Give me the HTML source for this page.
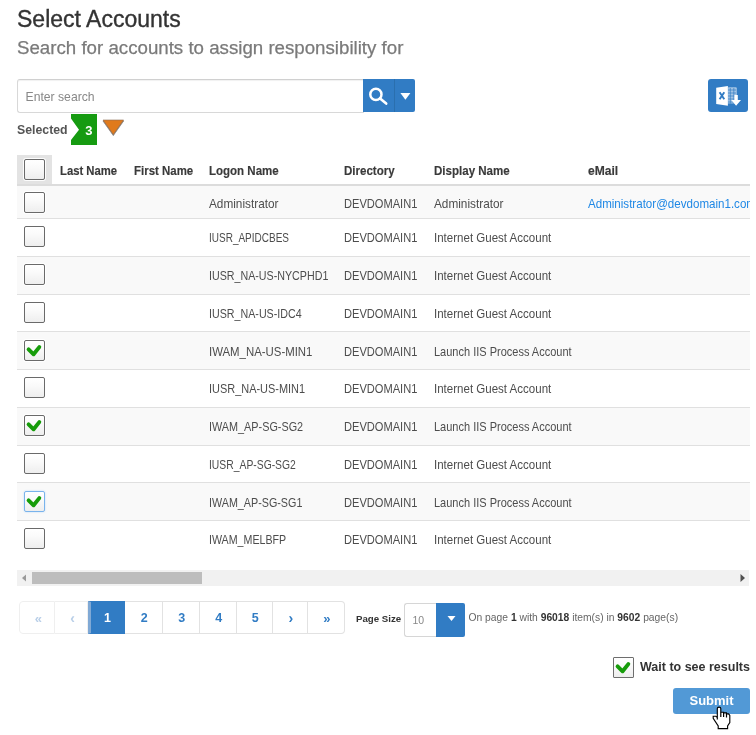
<!DOCTYPE html>
<html><head><meta charset="utf-8">
<style>
html,body{margin:0;padding:0;background:#fff;}
body{width:756px;height:735px;position:relative;overflow:hidden;font-family:"Liberation Sans",sans-serif;color:#555;}
.a{position:absolute;white-space:nowrap;}
.title{position:absolute;left:17px;top:4.6px;font-size:23px;color:#333;-webkit-text-stroke:0.35px #333;line-height:28px;}
.sub{position:absolute;left:17px;top:35.7px;font-size:18.7px;color:#7a7a7a;-webkit-text-stroke:0.25px #7a7a7a;line-height:24px;}
.search{position:absolute;left:17px;top:79px;width:346px;height:32px;border:1px solid #d8d8d8;border-top:1px solid #d0d0d0;box-shadow:inset 0 1px 1px rgba(0,0,0,0.06);border-right:none;border-radius:3px 0 0 3px;}
.search span{position:absolute;left:7.5px;top:9.5px;font-size:12.2px;color:#888;}
.sbtn{position:absolute;left:363px;top:79px;width:31px;height:33px;background:#317cc4;}
.dbtn{position:absolute;left:394px;top:79px;width:21px;height:33px;background:#317cc4;border-left:1px solid #2a6fae;box-sizing:border-box;border-radius:0 2px 2px 0;}
.xbtn{position:absolute;left:708px;top:79px;width:40px;height:33px;background:#317cc4;border-radius:3px;}
.selected{position:absolute;left:17px;top:123.2px;font-size:12.3px;font-weight:bold;color:#555;}
.badge{position:absolute;left:71px;top:114px;width:26px;height:31px;}
.tri{position:absolute;left:101.5px;top:119.3px;}
.hdr{position:absolute;left:17px;top:155px;width:733px;height:29px;background:#fff;}
.hcb{position:absolute;left:17px;top:155px;width:35px;height:29px;background:#e3e3e3;}
.hline{position:absolute;left:17px;top:184px;width:733px;height:2px;background:#dcdcdc;}
.th{position:absolute;top:163.6px;font-size:12px;font-weight:bold;color:#3a3a3a;-webkit-text-stroke:0.15px #3a3a3a;white-space:nowrap;transform-origin:0 0;line-height:14px;}
.clip{position:absolute;left:0;top:0;width:750px;height:560px;overflow:hidden;}
.row{position:absolute;left:17px;width:733px;}
.line{position:absolute;left:17px;width:733px;height:1px;background:#e0e0e0;}
.cb{position:absolute;left:24px;width:19px;height:19px;border:1px solid #6a6a6a;border-radius:2px;background:linear-gradient(#fff 0%,#fafafa 40%,#eeeeee 100%);box-shadow:0 0 0 1px rgba(255,255,255,0.9);}
.cb .ck{position:absolute;left:-1px;top:-1px;}
.cb.focus{border-color:#79b3ec;box-shadow:0 0 2px #b8d8f7;}
.td{position:absolute;font-size:12.2px;color:#4d4d4d;white-space:nowrap;line-height:14px;transform-origin:0 0;}
.td.em{color:#1f88e5;}
.scroll{position:absolute;left:17px;top:570px;width:732px;height:16px;background:#f1f1f1;}
.thumb{position:absolute;left:32px;top:572px;width:170px;height:12px;background:#bdbdbd;}
.pg{position:absolute;top:601px;height:33px;box-sizing:border-box;border:1px solid #e2e2e2;border-left:none;text-align:center;font-size:12.5px;font-weight:bold;color:#317cc4;line-height:33px;padding-left:1.5px;}
.pg.dis{color:#b9cfe8;border-color:#efefef;}
.pg.act{background:#317cc4;color:#fff;border-color:#317cc4;}
.psz{position:absolute;left:356px;top:613.3px;font-size:9.7px;font-weight:bold;color:#333;}
.pin{position:absolute;left:403.5px;top:603px;width:32.5px;height:34px;box-sizing:border-box;border:1px solid #d6d6d6;border-right:none;border-radius:3px 0 0 3px;}
.pin span{position:absolute;left:8px;top:9.6px;font-size:10.5px;color:#888;}
.pbtn{position:absolute;left:436px;top:603px;width:29px;height:34px;background:#317cc4;border-radius:0 2px 2px 0;}
.info{position:absolute;left:468.5px;top:612px;font-size:10.3px;color:#666;white-space:nowrap;}
.info b{color:#333;}
.wcb{position:absolute;left:613px;top:657px;width:19px;height:19px;border:1px solid #6e6e6e;border-radius:1px;background:linear-gradient(#fff 0%,#fafafa 40%,#eeeeee 100%);}
.wcb .ck{position:absolute;left:-1px;top:-1px;}
.wait{position:absolute;left:640px;top:659.6px;font-size:12.5px;font-weight:bold;color:#333;white-space:nowrap;}
.submit{position:absolute;left:673px;top:688px;width:77px;height:26px;background:#5299d6;border-radius:3px;color:#fff;font-size:13px;font-weight:bold;text-align:center;line-height:26px;}
</style></head><body><div id="wrap" style="position:absolute;left:0;top:0;width:756px;height:735px;will-change:transform;">
<div class="title">Select Accounts</div>
<div class="sub">Search for accounts to assign responsibility for</div>

<div class="search"><span>Enter search</span></div>
<div class="sbtn"><svg width="31" height="33" viewBox="0 0 31 33"><circle cx="12.9" cy="15.4" r="5.6" fill="none" stroke="#fff" stroke-width="2.5"/><path d="M17.1 19.4 L23.2 24.6" stroke="#fff" stroke-width="2.6" stroke-linecap="round"/></svg></div>
<div class="dbtn"><svg width="21" height="33" viewBox="0 0 21 33"><path d="M5.4 14 L15.4 14 L10.4 20.8 Z" fill="#fff"/></svg></div>
<div class="xbtn"><svg width="40" height="33" viewBox="0 0 40 33">
<path d="M20.1 8.2 H27.8 Q28.8 8.2 28.8 9.2 V24.6 H20.1 Z" fill="#fff" fill-opacity="0.55"/>
<path d="M20 11 H28 M20 14 H28 M20 17 H28 M20 20 H28 M20 23 H28 M22.3 9 V24.5 M25.8 9 V24.5" stroke="#317cc4" stroke-width="0.9" stroke-opacity="0.75" fill="none"/>
<path d="M8.2 8.8 L19.9 7 L19.9 26.8 L8.2 25 Z" fill="#fff"/>
<path d="M11.6 13.2 L16.3 20.2 M16.3 13.2 L11.6 20.2" stroke="#317cc4" stroke-width="1.9"/>
<path d="M26.4 15.9 H29.8 V21 H33 L28.1 26.8 L23.3 21 H26.4 Z" fill="#fff"/>
</svg></div>

<div class="selected">Selected</div>
<svg class="badge" width="26" height="31" viewBox="0 0 26 31"><path d="M0 0 H26 V31 H0 V26 L8 15.8 L0 4.5 Z" fill="#169b11"/><text x="17.8" y="21.2" font-family="Liberation Sans" font-size="13" font-weight="bold" fill="#fff" text-anchor="middle">3</text></svg>
<svg class="tri" width="26" height="20" viewBox="0 0 26 20"><defs><filter id="sh" x="-20%" y="-20%" width="140%" height="150%"><feGaussianBlur in="SourceAlpha" stdDeviation="0.7"/><feOffset dy="0.6"/><feComponentTransfer><feFuncA type="linear" slope="0.6"/></feComponentTransfer><feMerge><feMergeNode/><feMergeNode in="SourceGraphic"/></feMerge></filter></defs><path d="M1 1 H21.6 L11.3 15.6 Z" fill="#e07a1f" stroke="#8a6a50" stroke-width="0.6" stroke-linejoin="round" filter="url(#sh)"/></svg>

<div class="clip">
<div class="hdr"></div>
<div class="hcb"></div>
<div class="hline"></div>
<div class="cb" style="top:159px;"></div>
<div class="th" style="left:60px;transform:scaleX(0.9404)">Last Name</div>
<div class="th" style="left:134px;transform:scaleX(0.9543)">First Name</div>
<div class="th" style="left:209px;transform:scaleX(0.9590)">Logon Name</div>
<div class="th" style="left:344px;transform:scaleX(0.9613)">Directory</div>
<div class="th" style="left:434px;transform:scaleX(0.9618)">Display Name</div>
<div class="th" style="left:588px;transform:scaleX(1.0056)">eMail</div>

<div class="row" style="top:186px;height:32px;background:#f9f9f9"></div>
<div class="line" style="top:218px"></div>
<div class="cb" style="top:192px"></div>
<div class="td" style="top:196.80px;left:209px;transform:scaleX(0.9678)">Administrator</div>
<div class="td" style="top:196.80px;left:344px;transform:scaleX(0.9099)">DEVDOMAIN1</div>
<div class="td" style="top:196.80px;left:434px;transform:scaleX(0.9678)">Administrator</div>
<div class="td em" style="top:196.80px;left:588px;transform:scaleX(0.949)">Administrator@devdomain1.com</div>
<div class="row" style="top:219px;height:37px;background:#ffffff"></div>
<div class="line" style="top:256px"></div>
<div class="cb" style="top:226px"></div>
<div class="td" style="top:231.38px;left:209px;transform:scaleX(0.8201)">IUSR_APIDCBES</div>
<div class="td" style="top:231.38px;left:344px;transform:scaleX(0.9099)">DEVDOMAIN1</div>
<div class="td" style="top:231.38px;left:434px;transform:scaleX(0.9458)">Internet Guest Account</div>
<div class="row" style="top:257px;height:37px;background:#f9f9f9"></div>
<div class="line" style="top:294px"></div>
<div class="cb" style="top:264px"></div>
<div class="td" style="top:269.12px;left:209px;transform:scaleX(0.8767)">IUSR_NA-US-NYCPHD1</div>
<div class="td" style="top:269.12px;left:344px;transform:scaleX(0.9099)">DEVDOMAIN1</div>
<div class="td" style="top:269.12px;left:434px;transform:scaleX(0.9458)">Internet Guest Account</div>
<div class="row" style="top:295px;height:36px;background:#ffffff"></div>
<div class="line" style="top:331px"></div>
<div class="cb" style="top:302px"></div>
<div class="td" style="top:306.88px;left:209px;transform:scaleX(0.8770)">IUSR_NA-US-IDC4</div>
<div class="td" style="top:306.88px;left:344px;transform:scaleX(0.9099)">DEVDOMAIN1</div>
<div class="td" style="top:306.88px;left:434px;transform:scaleX(0.9458)">Internet Guest Account</div>
<div class="row" style="top:332px;height:37px;background:#f9f9f9"></div>
<div class="line" style="top:369px"></div>
<div class="cb" style="top:340px"><svg class="ck" width="21" height="21" viewBox="0 0 21 21"><path d="M4.6 9.4 L9.6 14.3 L15.3 7.1" fill="none" stroke="#169c0a" stroke-width="3.9" stroke-linecap="round" stroke-linejoin="round"/></svg></div>
<div class="td" style="top:344.62px;left:209px;transform:scaleX(0.9354)">IWAM_NA-US-MIN1</div>
<div class="td" style="top:344.62px;left:344px;transform:scaleX(0.9099)">DEVDOMAIN1</div>
<div class="td" style="top:344.62px;left:434px;transform:scaleX(0.9027)">Launch IIS Process Account</div>
<div class="row" style="top:370px;height:37px;background:#ffffff"></div>
<div class="line" style="top:407px"></div>
<div class="cb" style="top:377px"></div>
<div class="td" style="top:382.38px;left:209px;transform:scaleX(0.8981)">IUSR_NA-US-MIN1</div>
<div class="td" style="top:382.38px;left:344px;transform:scaleX(0.9099)">DEVDOMAIN1</div>
<div class="td" style="top:382.38px;left:434px;transform:scaleX(0.9458)">Internet Guest Account</div>
<div class="row" style="top:408px;height:37px;background:#f9f9f9"></div>
<div class="line" style="top:445px"></div>
<div class="cb" style="top:415px"><svg class="ck" width="21" height="21" viewBox="0 0 21 21"><path d="M4.6 9.4 L9.6 14.3 L15.3 7.1" fill="none" stroke="#169c0a" stroke-width="3.9" stroke-linecap="round" stroke-linejoin="round"/></svg></div>
<div class="td" style="top:420.12px;left:209px;transform:scaleX(0.8887)">IWAM_AP-SG-SG2</div>
<div class="td" style="top:420.12px;left:344px;transform:scaleX(0.9099)">DEVDOMAIN1</div>
<div class="td" style="top:420.12px;left:434px;transform:scaleX(0.9027)">Launch IIS Process Account</div>
<div class="row" style="top:446px;height:36px;background:#ffffff"></div>
<div class="line" style="top:482px"></div>
<div class="cb" style="top:453px"></div>
<div class="td" style="top:457.88px;left:209px;transform:scaleX(0.8490)">IUSR_AP-SG-SG2</div>
<div class="td" style="top:457.88px;left:344px;transform:scaleX(0.9099)">DEVDOMAIN1</div>
<div class="td" style="top:457.88px;left:434px;transform:scaleX(0.9458)">Internet Guest Account</div>
<div class="row" style="top:483px;height:37px;background:#f9f9f9"></div>
<div class="line" style="top:520px"></div>
<div class="cb focus" style="top:491px"><svg class="ck" width="21" height="21" viewBox="0 0 21 21"><path d="M4.6 9.4 L9.6 14.3 L15.3 7.1" fill="none" stroke="#169c0a" stroke-width="3.9" stroke-linecap="round" stroke-linejoin="round"/></svg></div>
<div class="td" style="top:495.62px;left:209px;transform:scaleX(0.8819)">IWAM_AP-SG-SG1</div>
<div class="td" style="top:495.62px;left:344px;transform:scaleX(0.9099)">DEVDOMAIN1</div>
<div class="td" style="top:495.62px;left:434px;transform:scaleX(0.9027)">Launch IIS Process Account</div>
<div class="row" style="top:521px;height:37px;background:#ffffff"></div>
<div class="cb" style="top:528px"></div>
<div class="td" style="top:533.38px;left:209px;transform:scaleX(0.8745)">IWAM_MELBFP</div>
<div class="td" style="top:533.38px;left:344px;transform:scaleX(0.9099)">DEVDOMAIN1</div>
<div class="td" style="top:533.38px;left:434px;transform:scaleX(0.9458)">Internet Guest Account</div>
</div>

<div class="scroll"></div>
<div class="thumb"></div>
<svg class="a" style="left:21px;top:574px" width="6" height="8"><path d="M5 0.5 V7.5 L1 4 Z" fill="#9a9a9a"/></svg>
<svg class="a" style="left:740px;top:574px" width="6" height="8"><path d="M0.5 0 V8 L5 4 Z" fill="#505050"/></svg>

<div class="pg dis" style="left:19px;width:36px;border-left:1px solid #efefef;border-radius:4px 0 0 4px;font-size:13px;padding-left:2.5px;">&laquo;</div>
<div class="pg dis" style="left:55px;width:33px;padding-left:3px;font-size:14px;">&lsaquo;</div>
<div class="pg act" style="left:88px;width:37px;border-left:3px solid #80a9d5;padding-left:0;">1</div>
<div class="pg" style="left:125px;width:38px;">2</div>
<div class="pg" style="left:163px;width:37px;">3</div>
<div class="pg" style="left:200px;width:37px;">4</div>
<div class="pg" style="left:237px;width:36px;">5</div>
<div class="pg" style="left:273px;width:35px;font-size:14px;">&rsaquo;</div>
<div class="pg" style="left:308px;width:37px;font-size:13px;border-radius:0 4px 4px 0;">&raquo;</div>

<div class="psz">Page Size</div>
<div class="pin"><span>10</span></div>
<div class="pbtn"><svg width="29" height="33" viewBox="0 0 29 33"><path d="M11.5 13 L19.5 13 L15.5 18 Z" fill="#fff"/></svg></div>
<div class="info">On page <b>1</b> with <b>96018</b> item(s) in <b>9602</b> page(s)</div>

<div class="wcb"><svg class="ck" width="21" height="21" viewBox="0 0 21 21"><path d="M4.6 9.4 L9.6 14.3 L15.3 7.1" fill="none" stroke="#169c0a" stroke-width="3.9" stroke-linecap="round" stroke-linejoin="round"/></svg></div>
<div class="wait">Wait to see results</div>
<div class="submit">Submit</div>
<svg class="a" style="left:712px;top:706px" width="20" height="24" viewBox="0 0 20 24"><path d="M5.3 13.5 V2.6 Q5.3 1.1 7.05 1.1 Q8.8 1.1 8.8 2.6 V6.2 H11.6 V6.9 H14.5 V7.8 H16.6 L17.8 9.4 V16.6 L15.6 20 V22.6 H6.2 V20 L1.2 12.4 V10.2 H3.8 L5.3 11.6 Z" fill="#fff" stroke="#000" stroke-width="1.15" stroke-linejoin="miter"/><path d="M8.8 6.2 V10.9 M11.6 6.9 V10.9 M14.5 7.8 V11.4" stroke="#000" stroke-width="1.2"/></svg>
</div></body></html>
